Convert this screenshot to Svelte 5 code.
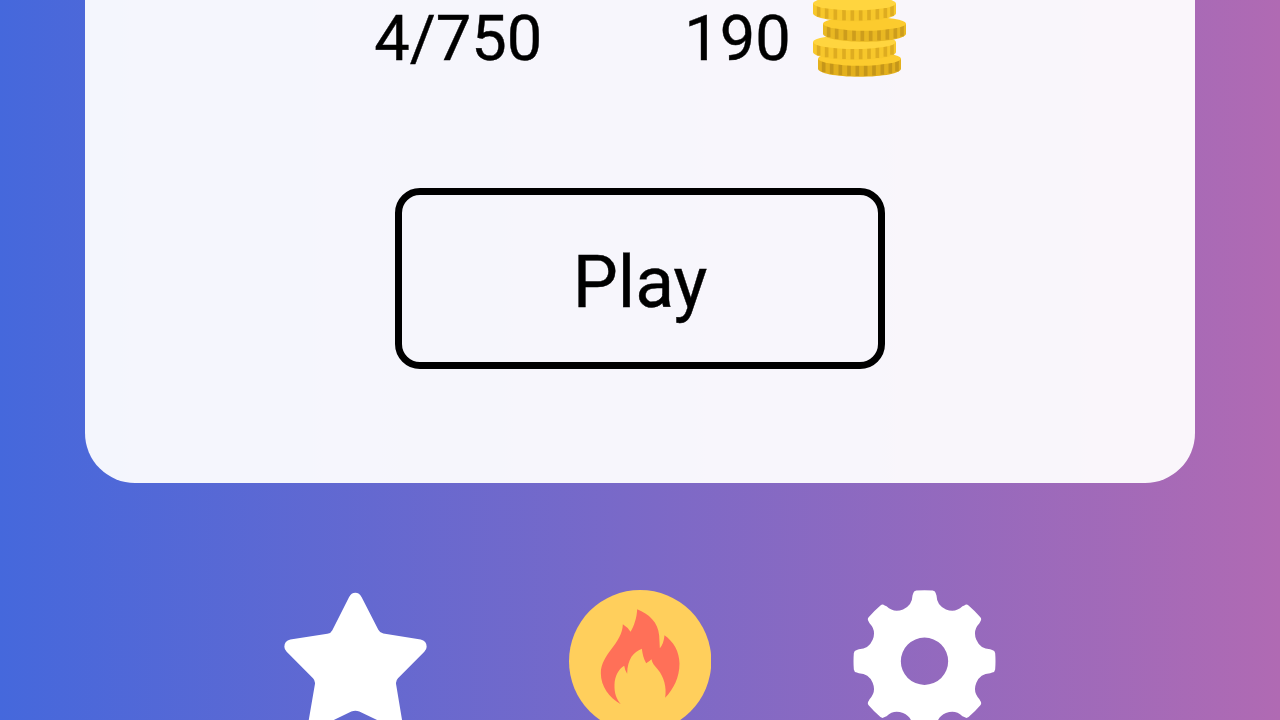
<script lang="ts">
  let level = $state(4);
  let total = 750;
  let coins = $state(190);

  // stacked from the bottom up: left edge, centre of the face, shade
  const stack = [
    { x: 53, y: 176, face: '#fccb2e', light: '#e3b01d', dark: '#c5961a' },
    { x: 38, y: 126, face: '#ffd53f', light: '#f7c72b', dark: '#deac20' },
    { x: 68, y: 71, face: '#fccb2e', light: '#e9b822', dark: '#cd9d1c' },
    { x: 38, y: 10, face: '#ffd53f', light: '#f7c72b', dark: '#deac20' }
  ];
  const ridges = [17, 41, 67, 93, 118, 143, 168, 193, 217, 237];

  const gear = gearPath(8);

  function gearPath(teeth: number) {
    const at = (u: number, v: number, i: number) => {
      const a = (i * 2 * Math.PI) / teeth;
      const x = u * Math.cos(a) + v * Math.sin(a);
      const y = u * Math.sin(a) - v * Math.cos(a);
      return `${x.toFixed(1)} ${y.toFixed(1)}`;
    };
    let d = `M${at(-36, 197, 0)}`;
    for (let i = 0; i < teeth; i++) {
      d += `L${at(-34, 203, i)}Q${at(-33, 211, i)} ${at(-25, 212, i)}`;
      d += `Q${at(0, 214, i)} ${at(25, 212, i)}`;
      d += `Q${at(33, 211, i)} ${at(34, 203, i)}L${at(36, 197, i)}`;
      d += `A46 46 0 0 0 ${at(-36, 197, i + 1)}`;
    }
    return d + 'Z M71 0A71 71 0 1 0 -71 0A71 71 0 1 0 71 0Z';
  }
</script>

<main class="screen">
  <section class="card">
    <div class="stats">
      <span>{level}/{total}</span>
      <div class="coins">
        <span>{coins}</span>
        <svg class="coin-stack" viewBox="38 0 279 231" aria-hidden="true">
          {#each stack as coin}
            <g transform="translate({coin.x} {coin.y})">
              <path d="M0 0V30C0 43 52 54 124.500 54S249 43 249 30V0Z" fill={coin.light} />
              {#each ridges as r}
                {@const low = 29 + 24 * Math.sqrt(1 - ((r - 124.5) / 124.5) ** 2)}
                <path d="M{r} {low - 34}V{low - 1}" stroke={coin.dark} stroke-width="11" />
              {/each}
              <ellipse cx="124.500" cy="0" rx="124.500" ry="21" fill={coin.face} />
            </g>
          {/each}
        </svg>
      </div>
    </div>
    <button class="play">Play</button>
  </section>

  <nav class="menu">
    <button class="icon" aria-label="Favorites">
      <svg viewBox="42 28.500 427.500 427.500">
        <path
          fill="#fff"
          d="M237 50Q244 37 256 37T275 50L325 148Q329 157 340 159L452 177Q470 181 470 199Q470 207 463 214L384 293Q377 300 378 310L396 418Q397 439 379 442Q371 443 364 439L268 393Q256 389 244 393L149 439Q141 443 133 442Q115 439 116 420L135 310Q136 300 129 293L50 214Q43 207 43 199Q43 181 61 177L172 160Q183 158 187 149Z"
        />
      </svg>
    </button>
    <button class="icon" aria-label="Streak">
      <svg viewBox="26.500 29.500 427.500 427.500">
        <circle cx="240" cy="243" r="213.500" fill="#ffcf5c" />
        <path
          fill="#ff7058"
          d="M231 87C266 101 294 126 297 166Q298 183 299 204Q311 190 313 165C340 184 358 214 358 251C358 291 340 328 315 353C320 320 311 290 293 268C283 256 276 249 274 237Q268 243 258 249C250 236 247 221 245 206C220 216 202 236 201 281Q194 270 192 257C174 268 164 289 163 313C162 338 169 358 182 372C147 352 122 318 122 279C122 221 187 190 188 132Q203 141 211 155C222 136 230 112 231 87Z"
        />
      </svg>
    </button>
    <button class="icon" aria-label="Settings">
      <svg viewBox="-214.500 -213.750 427.500 427.500">
        <path d={gear} fill="#fff" fill-rule="evenodd" />
      </svg>
    </button>
  </nav>
</main>

<style>
  :global(body){
    margin:0;
  }
  .screen{
    height:720px;
    overflow:hidden;
    display:flex;
    flex-direction:column;
    align-items:center;
    background: linear-gradient(90deg, #4568dc, #b06ab3);
    color:#000;
    font-family: Roboto, sans-serif;
  }
  .card{
    box-sizing:border-box;
    flex:none;
    width:1110px;
    height:483px;
    padding-bottom:114px;
    display:flex;
    flex-direction:column;
    align-items:center;
    justify-content:flex-end;
    gap:111px;
    background: rgba(255,255,255,0.94);
    border-radius:0 0 50px 50px;
  }
  .stats{
    display:flex;
    align-items:center;
    gap:142px;
    height:77px;
    font-size:63.2px;
    line-height:75px;
    -webkit-text-stroke:0.4px #000;
  }
  .coins{
    display:flex;
    align-items:center;
    gap:22px;
  }
  .coin-stack{
    display:block;
    width:93px;
    height:77px;
  }
  .play{
    box-sizing:border-box;
    width:490px;
    height:181px;
    padding:7px 0 0;
    border:7px solid #000;
    border-radius:25px;
    background:none;
    color:inherit;
    font-family:inherit;
    font-size:71.5px;
    -webkit-text-stroke:0.4px #000;
    cursor:pointer;
  }
  .menu{
    display:flex;
    gap:142px;
    padding-top:107px;
  }
  .icon{
    flex:none;
    width:142.5px;
    height:142.5px;
    padding:0;
    border:none;
    background:none;
    cursor:pointer;
  }
  .icon svg{
    display:block;
    width:100%;
    height:100%;
  }
</style>
